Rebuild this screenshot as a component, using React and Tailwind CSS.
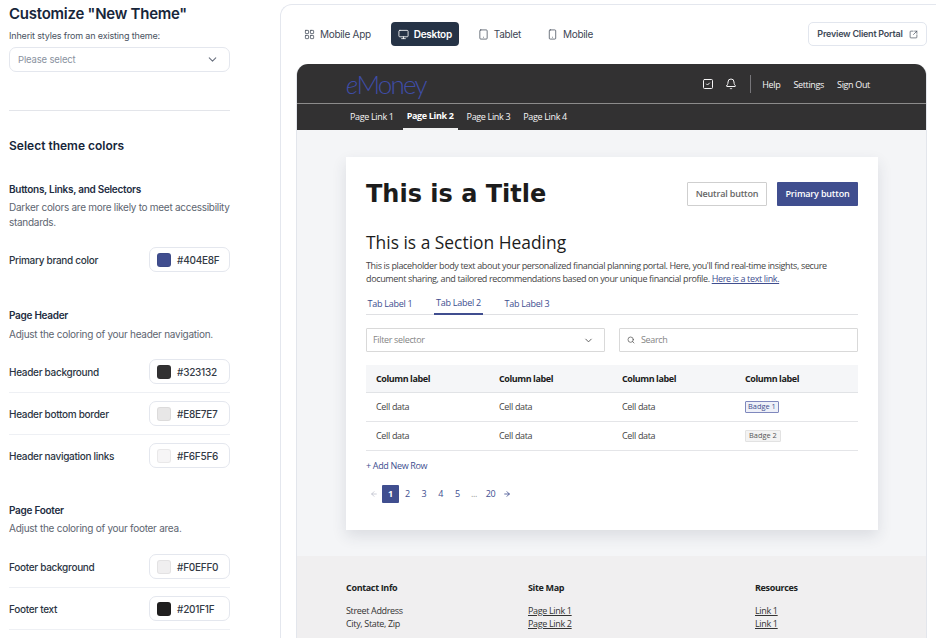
import { LayoutGrid, Monitor, Tablet, Smartphone, SquareArrowOutUpRight, SquareCheck, Bell, Search, ChevronDown, ArrowLeft, ArrowRight } from 'lucide-react';

function ColorRow({ label, hex, color, divider }) {
  return (
    <div className={divider ? 'border-b border-[#eef0f4] pb-2 mb-[8px]' : ''}>
      <div className="flex items-center justify-between h-[25px]">
        <span className="pt-px text-[10px] tracking-[-0.3px] font-medium text-[#2b3543]">{label}</span>
        <div className="w-[81px] h-[25px] flex items-center gap-[6px] px-[7px] bg-white border border-[#e4e7ee] rounded-[7px]">
          <span className={`w-[14px] h-[14px] rounded-[3px] border border-black/5 ${color}`}></span>
          <span className="pt-px text-[10px] tracking-[-0.25px] font-medium text-[#333a45]">{hex}</span>
        </div>
      </div>
    </div>
  );
}

function SideHeading({ title, className }) {
  return <h3 className={`h-[14px] leading-[14px] text-[10px] tracking-[-0.28px] font-semibold text-[#1e2d42] ${className}`}>{title}</h3>;
}

function Sidebar() {
  return (
    <aside className="w-[280px] shrink-0 pl-[9px] pr-[50px] pt-[4px]">
      <h1 className="h-[20px] leading-[20px] text-[15px] tracking-[-0.25px] font-semibold text-[#17263a]">Customize "New Theme"</h1>
      <p className="mt-[6px] h-[12px] leading-[12px] text-[9px] tracking-[-0.16px] text-[#4a5361]">Inherit styles from an existing theme:</p>
      <div className="mt-[5px] h-[25px] flex items-center justify-between pl-[8px] pr-[10px] border border-[#e4e7ee] rounded-[7px]">
        <span className="pt-px text-[9.5px] tracking-[-0.15px] text-[#8a92a0]">Please select</span>
        <ChevronDown size={13} className="text-[#6b7280]" />
      </div>
      <div className="mt-[38px] border-t border-[#e3e5ea]"></div>
      <h2 className="mt-[27px] h-[16px] leading-[16px] text-[12px] font-semibold text-[#17263a]">Select theme colors</h2>

      <SideHeading title="Buttons, Links, and Selectors" className="mt-[28px]" />
      <p className="mt-[4px] w-[228px] text-[10px] tracking-[-0.28px] leading-[15px] text-[#5d6570]">Darker colors are more likely to meet accessibility standards.</p>
      <div className="mt-[17px]">
        <ColorRow label="Primary brand color" hex="#404E8F" color="bg-[#404e8f]" />
      </div>

      <SideHeading title="Page Header" className="mt-[36px]" />
      <p className="mt-[5px] h-[14px] leading-[14px] text-[10px] tracking-[-0.26px] text-[#5d6570]">Adjust the coloring of your header navigation.</p>
      <div className="mt-[18px]">
        <ColorRow label="Header background" hex="#323132" color="bg-[#323132]" divider />
        <ColorRow label="Header bottom border" hex="#E8E7E7" color="bg-[#e8e7e7]" divider />
        <ColorRow label="Header navigation links" hex="#F6F5F6" color="bg-[#f6f5f6]" />
      </div>

      <SideHeading title="Page Footer" className="mt-[35px]" />
      <p className="mt-[4px] h-[14px] leading-[14px] text-[10px] tracking-[-0.26px] text-[#5d6570]">Adjust the coloring of your footer area.</p>
      <div className="mt-[19px]">
        <ColorRow label="Footer background" hex="#F0EFF0" color="bg-[#f0eff0]" divider />
        <ColorRow label="Footer text" hex="#201F1F" color="bg-[#201f1f]" divider />
        <div className="ml-auto w-[81px] h-[25px] bg-white border border-[#e4e7ee] rounded-[7px]"></div>
      </div>
    </aside>
  );
}

function DeviceTab({ icon: Icon, label, className, size = 11 }) {
  return (
    <div className={`h-[24px] flex items-center text-[10px] tracking-[-0.3px] text-[#3d4654] ${className}`}>
      <Icon size={size} strokeWidth={1.6} />
      <span className="pt-px">{label}</span>
    </div>
  );
}

function Toolbar() {
  return (
    <div className="h-[24px] flex items-center mt-[17px] pl-[23px] pr-[9px]">
      <DeviceTab icon={LayoutGrid} label="Mobile App" className="gap-[5px]" />
      <div className="ml-[20px] w-[68px] h-[24px] flex items-center justify-center gap-[5px] rounded-[4px] bg-[#263346] text-white text-[10px] tracking-[-0.28px] font-semibold">
        <Monitor size={11} strokeWidth={1.8} />
        <span className="pt-px">Desktop</span>
      </div>
      <DeviceTab icon={Tablet} label="Tablet" className="ml-[19px] gap-[5px]" />
      <DeviceTab icon={Smartphone} label="Mobile" className="ml-[26px] gap-[5px]" />
      <div className="ml-auto w-[119px] h-[24px] flex items-center justify-center gap-[6px] bg-white border border-[#e2e6ee] rounded-[5px] text-[9px] tracking-[-0.24px] font-semibold text-[#414a58]">
        <span>Preview Client Portal</span>
        <SquareArrowOutUpRight size={9} strokeWidth={1.8} />
      </div>
    </div>
  );
}

function PortalHeader() {
  return (
    <header className="bg-[#323132] rounded-t-[11px] text-[#f6f5f6]">
      <div className="h-[40px] flex items-center pl-[49px] pr-[56px] border-b border-[#8c8b8b]">
        <span className="font-['Lato',sans-serif] font-light text-[26px] leading-none tracking-[-1.8px] text-[#3f4da8]">
          <span className="italic">e</span>Money
        </span>
        <SquareCheck size={12} strokeWidth={2} className="ml-auto" />
        <Bell size={12} strokeWidth={2} className="ml-[11px]" />
        <span className="mt-[1px] ml-[13px] w-px h-[18px] bg-[#77767a]"></span>
        <span className="mt-[2px] ml-[11px]">Help</span>
        <span className="mt-[2px] ml-[13px]">Settings</span>
        <span className="mt-[2px] ml-[13px]">Sign Out</span>
      </div>
      <nav className="h-[26px] flex items-stretch pl-[49px] gap-[5px]">
        <span className="px-[4px] flex items-center">Page Link 1</span>
        <span className="px-[4px] flex items-center font-bold text-white border-b-2 border-[#f0f0f0]">Page Link 2</span>
        <span className="px-[4px] flex items-center">Page Link 3</span>
        <span className="px-[4px] flex items-center">Page Link 4</span>
      </nav>
    </header>
  );
}

function DataTable() {
  const rows = [
    <span className="inline-flex h-[12px] px-[2px] items-center border border-[#7f88bd] bg-[#eef0f8] text-[#404e8f] text-[7.4px] tracking-normal rounded-[1px]">Badge 1</span>,
    <span className="inline-flex h-[12px] px-[3px] items-center border border-[#e2e2e2] bg-[#f3f3f3] text-[#555] text-[7.4px] tracking-normal rounded-[1px]">Badge 2</span>
  ];

  return (
    <div className="mt-[13px]">
      <div className="grid grid-cols-4 h-[28px] pt-px items-center bg-[#f5f6f8] border-b border-[#e1e3e6] font-bold tracking-[-0.42px] text-[#1b1b1b]">
        {[0, 1, 2, 3].map(i => <span key={i} className="pl-[10px]">Column label</span>)}
      </div>
      {rows.map((badge, i) => (
        <div key={i} className="grid grid-cols-4 h-[29px] items-center border-b-[1.5px] border-[#e4e5e8] text-[#444]">
          <span className="pl-[10px]">Cell data</span>
          <span className="pl-[10px]">Cell data</span>
          <span className="pl-[10px]">Cell data</span>
          <span className="pl-[10px] flex items-center">{badge}</span>
        </div>
      ))}
    </div>
  );
}

function Pagination() {
  const cell = 'w-[16.67px] h-[18px] flex items-center justify-center text-[#404e8f]';
  return (
    <div className="mt-[13px] flex items-center">
      <span className="w-[16px] h-[18px] flex items-center justify-center"><ArrowLeft size={8} className="text-[#b4b7c4]" /></span>
      <span className="w-[17px] h-[18px] flex items-center justify-center bg-[#404e8f] text-white font-bold rounded-[1px]">1</span>
      {['2', '3', '4', '5'].map(n => <span key={n} className={cell}>{n}</span>)}
      <span className="w-[16.67px] h-[18px] flex items-center justify-center text-[#9a9a9a]">...</span>
      <span className={cell}>20</span>
      <span className={cell}><ArrowRight size={8} strokeWidth={2.5} /></span>
    </div>
  );
}

function ThemeCard() {
  return (
    <section className="w-[532px] h-[373px] bg-white shadow-[0_6px_14px_rgba(40,50,70,0.12)] px-[20px] pt-[25px]">
      <div className="flex items-center justify-between h-[24px]">
        <h1 className="font-['DejaVu_Sans',sans-serif] font-bold text-[24px] leading-[24px] tracking-normal text-[#1c1c1c]">This is a Title</h1>
        <div className="flex gap-[10px] tracking-[-0.17px]">
          <button className="w-[80px] h-[24px] bg-white border border-[#cfcfcf] rounded-[1px] font-semibold text-[#666]">Neutral button</button>
          <button className="w-[81px] h-[24px] bg-[#404e8f] rounded-[1px] font-semibold text-white">Primary button</button>
        </div>
      </div>
      <h2 className="mt-[24px] h-[24px] leading-[24px] text-[17.4px] tracking-normal font-medium text-[#1c1c1c]">This is a Section Heading</h2>
      <p className="mt-[5px] leading-[13px] tracking-[-0.36px] text-[#444]">
        This is placeholder body text about your personalized financial planning portal. Here, you'll find real-time insights, secure document sharing, and tailored recommendations based on your unique financial profile. <a className="text-[#404e8f] underline">Here is a text link.</a>
      </p>
      <div className="mt-[7px] h-[23px] flex border-b border-[#dfe0e3] tracking-[-0.27px] text-[#404e8f]">
        <span className="h-[23px] w-[48px] pt-px flex items-center justify-center">Tab Label 1</span>
        <span className="ml-[20px] h-[23px] w-[49px] pt-px flex items-center justify-center border-b-2 border-[#404e8f]">Tab Label 2</span>
        <span className="ml-[20px] h-[23px] w-[48px] pt-px flex items-center justify-center">Tab Label 3</span>
      </div>
      <div className="mt-[13px] grid grid-cols-2 gap-[14px] text-[#858585]">
        <div className="h-[24px] flex items-center justify-between pl-[6px] pr-[10px] border border-[#d9d9d9] rounded-[1px]">
          <span>Filter selector</span>
          <ChevronDown size={11} className="text-[#555]" />
        </div>
        <div className="h-[24px] flex items-center gap-[6px] pl-[7px] border border-[#d9d9d9] rounded-[1px]">
          <Search size={8} strokeWidth={2.2} className="text-[#555]" />
          <span>Search</span>
        </div>
      </div>
      <DataTable />
      <p className="mt-[8px] h-[13px] leading-[13px] text-[#404e8f]">+ Add New Row</p>
      <Pagination />
    </section>
  );
}

function PortalFooter() {
  return (
    <footer className="h-[90px] bg-[#f0eff0] pl-[49px] pt-[25px] flex text-[#333]">
      <div className="w-[182px]">
        <h4 className="font-bold text-[#201f1f] leading-[13px]">Contact Info</h4>
        <p className="mt-[10px] leading-[13px]">Street Address<br />City, State, Zip</p>
      </div>
      <div className="w-[227px]">
        <h4 className="font-bold text-[#201f1f] leading-[13px]">Site Map</h4>
        <p className="mt-[10px] leading-[13px] underline">Page Link 1<br />Page Link 2</p>
      </div>
      <div>
        <h4 className="font-bold text-[#201f1f] leading-[13px]">Resources</h4>
        <p className="mt-[10px] leading-[13px] underline">Link 1<br />Link 1</p>
      </div>
    </footer>
  );
}

export default function App() {
  return (
    <div className="w-[936px] h-[638px] overflow-hidden flex bg-white font-['Inter',sans-serif]">
      <Sidebar />
      <main className="flex-1 mt-[4px] border-l border-t border-[#e4e7ee] rounded-tl-[12px] overflow-hidden">
        <Toolbar />
        <div className="ml-[15px] mr-[9px] mt-[18px] border-x border-[#e3e6ec] rounded-t-[12px] font-['Open_Sans',sans-serif] text-[9px] tracking-[-0.34px]">
          <PortalHeader />
          <div className="h-[426px] bg-[#f4f5f7] pl-[49px] pt-[27px]">
            <ThemeCard />
          </div>
          <PortalFooter />
        </div>
      </main>
    </div>
  );
}
